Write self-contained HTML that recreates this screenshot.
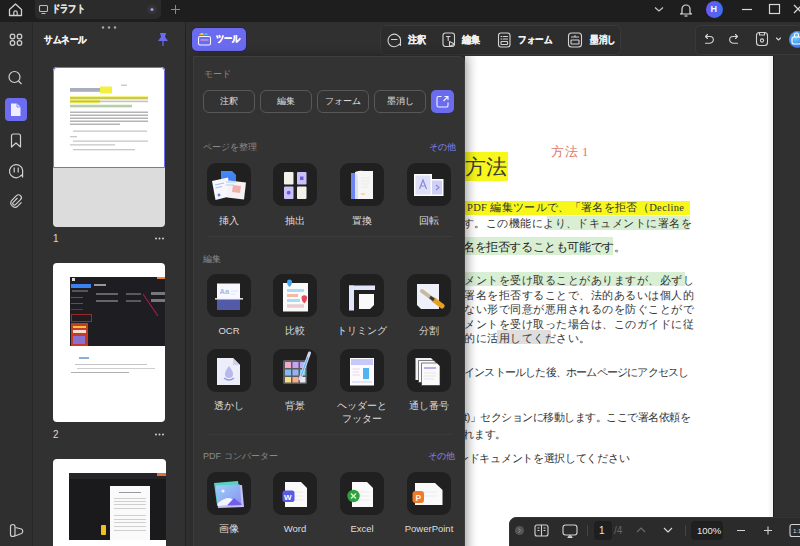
<!DOCTYPE html>
<html><head><meta charset="utf-8">
<style>
*{box-sizing:border-box;margin:0;padding:0}
html,body{width:800px;height:546px;overflow:hidden;background:#303030;font-family:"Liberation Sans",sans-serif;color:#e8e8e8}
.a{position:absolute}
svg.i{position:absolute;overflow:visible}
.txt{position:absolute;white-space:nowrap;line-height:1}
.b{-webkit-text-stroke:0.3px currentColor}
#title{left:0;top:0;width:800px;height:22px;background:#1e1e1e}
#rail{left:0;top:22px;width:33px;height:524px;background:#2f2f2f;border-right:1px solid #272727}
#thumbs{left:33px;top:22px;width:153px;height:524px;background:#313131;border-right:1px solid #222}
#main{left:186px;top:22px;width:614px;height:524px;background:#303030}
</style></head><body>

<!-- ============ Title bar ============ -->
<div id="title" class="a">
  <svg class="i" style="left:0;top:0" width="800" height="22">
    <!-- home -->
    <path d="M9.5 9.5 L15.5 4 L21.5 9.5 V15.5 H9.5 Z" fill="none" stroke="#d0d0d0" stroke-width="1.3" stroke-linejoin="round"/>
    <path d="M13.8 15.5 V12.5 A1.7 1.7 0 0 1 17.2 12.5 V15.5" fill="none" stroke="#d0d0d0" stroke-width="1.2"/>
  </svg>
  <div class="a" style="left:35px;top:0;width:126px;height:19px;background:#2b2b2b;border-radius:0 0 5px 5px"></div>
  <svg class="i" style="left:0;top:0" width="800" height="22">
    <!-- monitor icon in tab -->
    <rect x="39.5" y="5.5" width="8" height="6" rx="1" fill="none" stroke="#bdbdbd" stroke-width="1.1"/>
    <path d="M41.5 13.5 H45.5" stroke="#bdbdbd" stroke-width="1.1"/>
    <!-- close dot -->
    <circle cx="152" cy="9.5" r="5" fill="#343438"/>
    <circle cx="152" cy="9.5" r="1.6" fill="#9a9ad6"/>
    <!-- plus -->
    <path d="M175.5 5 V14 M171 9.5 H180" stroke="#8a8a8a" stroke-width="1"/>
    <!-- chevron -->
    <path d="M655 7.5 L659 11 L663 7.5" fill="none" stroke="#c8c8c8" stroke-width="1.2"/>
    <!-- bell -->
    <path d="M682 13 V9 A4 4 0 0 1 690 9 V13 L691.5 14 H680.5 Z" fill="none" stroke="#d8d8d8" stroke-width="1.2" stroke-linejoin="round"/>
    <path d="M684.5 16 H687.5" stroke="#d8d8d8" stroke-width="1.2"/>
    <!-- minimize -->
    <path d="M742 9.5 H752" stroke="#d8d8d8" stroke-width="1.2"/>
    <!-- maximize -->
    <rect x="769.5" y="4.5" width="10" height="9" fill="none" stroke="#d8d8d8" stroke-width="1.2"/>
    <!-- close -->
    <path d="M794 5 L802 13 M802 5 L794 13" stroke="#d8d8d8" stroke-width="1.2"/>
  </svg>
  <div class="txt b" style="left:52px;top:4px;font-size:10px;font-weight:bold;color:#e0e0e0;transform:scaleX(0.82);transform-origin:left">ドラフト</div>
  <!-- avatar -->
  <div class="a" style="left:705.5px;top:1px;width:17px;height:17px;border-radius:50%;background:linear-gradient(90deg,#7058f0,#3a70f0)"></div>
  <div class="txt" style="left:710.5px;top:5px;font-size:9px;font-weight:bold;color:#f4f4ff">H</div>
</div>

<!-- ============ Left rail ============ -->
<div id="rail" class="a"></div>
<svg class="i" style="left:0;top:0" width="33" height="546">
  <g fill="none" stroke="#d0d0d0" stroke-width="1.2">
    <circle cx="12.5" cy="36.5" r="2.3"/><circle cx="19.5" cy="36.5" r="2.3"/>
    <circle cx="12.5" cy="43" r="2.3"/><circle cx="19.5" cy="43" r="2.3"/>
    <!-- search -->
    <circle cx="14.5" cy="77" r="5.5"/><path d="M18.5 81 L21.5 84"/>
  </g>
  <!-- active page -->
  <rect x="5" y="98" width="22" height="23" rx="4" fill="#6c6cf0"/>
  <path d="M11 103.5 H17 L20.5 107 V116 H11 Z" fill="#f4f4ff" opacity="0.95"/>
  <path d="M17 103.5 V107 H20.5" fill="none" stroke="#6c6cf0" stroke-width="0.8"/>
  <g fill="none" stroke="#d0d0d0" stroke-width="1.2" stroke-linejoin="round">
    <!-- bookmark -->
    <path d="M11.5 147 V136 A2 2 0 0 1 13.5 134 H18.5 A2 2 0 0 1 20.5 136 V147 L16 143 Z"/>
    <!-- comment -->
    <path d="M21.5 175 A6.6 6.6 0 1 1 22.6 170 V177 Z"/>
    <path d="M14.2 167.5 V172.5 M18.2 167.5 V172.5"/>
    <!-- attachment -->
    <path d="M17.5 198 L13.2 202.3 A1.6 1.6 0 0 0 15.5 204.6 L20.5 199.6 A2.8 2.8 0 0 0 16.5 195.6 L11.8 200.3 A4.2 4.2 0 0 0 17.7 206.2 L21.5 202.4"/>
    <!-- bottom logo -->
    <rect x="10.5" y="524.5" width="4.5" height="12" rx="2.25"/><path d="M15 536 L21.5 533.5 A2.6 2.6 0 0 0 21.5 529 L15.5 527.5"/>
  </g>
</svg>

<!-- ============ Thumbnails ============ -->
<div id="thumbs" class="a"></div>
<div class="txt b" style="left:44px;top:35px;font-size:10px;font-weight:bold;color:#f2f2f2;transform:scaleX(0.85);transform-origin:left">サムネール</div>
<svg class="i" style="left:0;top:0" width="185" height="546">
  <!-- drag dots -->
  <circle cx="103" cy="27.5" r="1.2" fill="#aaa"/><circle cx="109" cy="27.5" r="1.2" fill="#aaa"/><circle cx="115" cy="27.5" r="1.2" fill="#aaa"/>
  <!-- pin -->
  <path d="M160 33 H166 L165 37 L168 41 H158 L161 37 Z" fill="#6b6bf0"/>
  <path d="M163 41 V46" stroke="#6b6bf0" stroke-width="1.2"/>
</svg>


<!-- thumbnails -->
<div class="a" style="left:53px;top:67px;width:112px;height:160px;background:#dcdcdc;border-radius:4px;overflow:hidden">
  <div class="a" style="left:0;top:0;width:112px;height:101px;background:#fff;border:1.5px solid #6f6ff0;border-radius:4px 4px 0 0"></div>
</div>
<svg class="i" style="left:0;top:0" width="185" height="546">
  <!-- page1 mini content -->
  <rect x="70" y="88" width="30" height="3.8" fill="#a8aebc"/>
  <rect x="100" y="86.5" width="12" height="7" fill="#f4f040"/>
  <rect x="121" y="84.5" width="6" height="1.5" fill="#ccc"/>
  <rect x="70" y="96.3" width="78" height="3.4" fill="#f0ee50"/>
  <rect x="70" y="99.7" width="30" height="3.4" fill="#f0ee50"/>
  <g fill="#9a9a70" opacity="0.55">
    <rect x="70" y="97.2" width="78" height="1.6"/><rect x="70" y="100.6" width="78" height="1.6"/>
  </g>
  <rect x="70" y="104.5" width="62" height="3.2" fill="#d6eec8"/>
  <rect x="70" y="105.3" width="62" height="1.6" fill="#9aa890" opacity="0.6"/>
  <g fill="#b4b4b4">
    <rect x="70" y="111.5" width="78" height="1.5"/><rect x="70" y="114.5" width="78" height="1.5"/>
    <rect x="70" y="117.5" width="78" height="1.5"/><rect x="70" y="120.5" width="78" height="1.5"/>
    <rect x="70" y="123.5" width="50" height="1.5"/>
  </g>
  <g fill="#c8c8c8">
    <rect x="73" y="130.5" width="74" height="1.3"/><rect x="70" y="136" width="7" height="1.3"/>
    <rect x="73" y="140.5" width="75" height="1.3"/><rect x="70" y="144.2" width="45" height="1.3"/>
    <rect x="73" y="149" width="62" height="1.3"/>
  </g>
  <text x="53" y="242" font-size="10" fill="#d8d8d8" font-family="Liberation Sans">1</text>
  <g fill="#d0d0d0"><circle cx="156" cy="238.5" r="1"/><circle cx="159.5" cy="238.5" r="1"/><circle cx="163" cy="238.5" r="1"/></g>
</svg>

<div class="a" style="left:53px;top:263px;width:112px;height:159px;background:#fff;border-radius:4px;overflow:hidden">
  <div class="a" style="left:17px;top:14px;width:95px;height:69px;background:#1d1d22"></div>
  <div class="a" style="left:19px;top:15px;width:3px;height:3px;background:#ddd"></div>
  <div class="a" style="left:18px;top:21px;width:20px;height:4px;background:#3b82f0"></div>
  <div class="a" style="left:19px;top:27px;width:16px;height:2px;background:#555"></div>
  <div class="a" style="left:18px;top:34px;width:12px;height:1px;background:#555"></div>
  <div class="a" style="left:18px;top:40px;width:12px;height:1px;background:#555"></div>
  <div class="a" style="left:18px;top:46px;width:12px;height:1px;background:#444"></div>
  <div class="a" style="left:18px;top:51px;width:21px;height:8px;border:1px solid #9a2a2a"></div>
  <div class="a" style="left:18px;top:60px;width:17px;height:23px;background:#c63a28"></div>
  <div class="a" style="left:20px;top:63px;width:13px;height:2px;background:#f6c040"></div>
  <div class="a" style="left:20px;top:67px;width:13px;height:3px;background:#f8e0d0"></div>
  <div class="a" style="left:20px;top:73px;width:12px;height:8px;background:#8a70d0"></div>
  <div class="a" style="left:41px;top:21px;width:12px;height:1.5px;background:#999"></div>
  <div class="a" style="left:43px;top:30px;width:22px;height:2px;background:#666"></div>
  <div class="a" style="left:43px;top:37px;width:22px;height:2px;background:#666"></div>
  <div class="a" style="left:73px;top:30px;width:15px;height:2px;background:#5a5a5a"></div>
  <div class="a" style="left:73px;top:37px;width:15px;height:2px;background:#5a5a5a"></div>
  <div class="a" style="left:98px;top:29px;width:14px;height:3px;background:#777"></div>
  <div class="a" style="left:98px;top:36px;width:14px;height:3px;background:#777"></div>
  <div class="a" style="left:104px;top:14px;width:8px;height:2px;background:#f0803a"></div>
  <svg class="i" style="left:0;top:0" width="112" height="159"><path d="M90 31 L105 53" stroke="#a02040" stroke-width="1.2"/></svg>
  <div class="a" style="left:26px;top:94px;width:10px;height:1.5px;background:#8ab0d8"></div>
  <div class="a" style="left:22px;top:101px;width:72px;height:1.2px;background:#c4c4c4"></div>
  <div class="a" style="left:24px;top:105px;width:78px;height:1.2px;background:#cfcfcf"></div>
  <div class="a" style="left:18px;top:109px;width:58px;height:1.2px;background:#b0b0b0"></div>
</div>
<svg class="i" style="left:0;top:0" width="185" height="546">
  <text x="53" y="438" font-size="10" fill="#d8d8d8" font-family="Liberation Sans">2</text>
  <g fill="#d0d0d0"><circle cx="156" cy="434.5" r="1"/><circle cx="159.5" cy="434.5" r="1"/><circle cx="163" cy="434.5" r="1"/></g>
</svg>

<div class="a" style="left:53px;top:459px;width:113px;height:100px;background:#fff;border-radius:4px;overflow:hidden">
  <div class="a" style="left:16px;top:14px;width:97px;height:67px;background:#1a1a1c"></div>
  <div class="a" style="left:16px;top:14px;width:97px;height:6px;background:#262628"></div>
  <div class="a" style="left:104px;top:14px;width:9px;height:3px;background:#e0703a"></div>
  <div class="a" style="left:57px;top:27px;width:40px;height:54px;background:#fafafa"></div>
  <div class="a" style="left:66px;top:33px;width:22px;height:1.2px;background:#999"></div>
  <div class="a" style="left:61px;top:39px;width:32px;height:1px;background:#cfcfcf"></div>
  <div class="a" style="left:61px;top:42px;width:32px;height:1px;background:#cfcfcf"></div>
  <div class="a" style="left:61px;top:45px;width:32px;height:1px;background:#cfcfcf"></div>
  <div class="a" style="left:61px;top:49px;width:32px;height:1px;background:#cfcfcf"></div>
  <div class="a" style="left:61px;top:56px;width:32px;height:1px;background:#cfcfcf"></div>
  <div class="a" style="left:61px;top:60px;width:32px;height:1px;background:#cfcfcf"></div>
  <div class="a" style="left:61px;top:63px;width:32px;height:1px;background:#cfcfcf"></div>
  <div class="a" style="left:61px;top:67px;width:32px;height:1px;background:#cfcfcf"></div>
  <div class="a" style="left:61px;top:71px;width:32px;height:1px;background:#cfcfcf"></div>
  <div class="a" style="left:48px;top:66px;width:5px;height:10px;background:#f0c020;border-radius:1px"></div>
</div>

<div id="main" class="a"></div>

<!-- ============ Main toolbar ============ -->
<div class="a" style="left:192px;top:28px;width:54px;height:23px;border-radius:5px;background:#6b6bef;box-shadow:0 0 0 1px #26264a"></div>
<svg class="i" style="left:0;top:0" width="800" height="60">
  <!-- tools icon -->
  <path d="M199 35 L201 33 H203 L204 35" fill="#f0c040"/>
  <path d="M203.5 35 L205 33 H207 L208 35" fill="#4fb0f0"/>
  <rect x="198.5" y="36.5" width="12" height="8.5" rx="1.5" fill="none" stroke="#f4f4ff" stroke-width="1.1"/>
  <path d="M200.5 40 H208.5" stroke="#c090e0" stroke-width="1.6"/>
  <!-- group boxes -->
  <rect x="380.5" y="25.5" width="240" height="29" rx="5" fill="#2d2d2d" stroke="#393939" stroke-width="1"/>
  <rect x="695.5" y="25.5" width="120" height="29" rx="5" fill="#2d2d2d" stroke="#393939" stroke-width="1"/>
  <g fill="none" stroke="#d4d4d4" stroke-width="1.1" stroke-linejoin="round" stroke-linecap="round">
    <!-- annotate -->
    <path d="M399.5 44 A6.3 6.3 0 1 1 400.5 39.5 V45.5 Z"/>
    <path d="M391.5 39.5 H397"/>
    <!-- edit -->
    <rect x="443" y="33" width="11.5" height="13.5" rx="2.5"/>
    <path d="M446.5 36.5 H450 M448.2 36.5 V40.5"/>
    <path d="M449.5 41.5 L454.5 44 L449.5 46.5 Z" fill="#2d2d2d"/>
    <!-- form -->
    <rect x="498.5" y="33" width="11.5" height="14" rx="2.5"/>
    <path d="M501 36.5 H502 M503.5 36.5 H507.5 M501 39 H502 M503.5 39 H507.5"/>
    <rect x="501" y="41.5" width="6.5" height="3" rx="0.5"/>
    <!-- redact -->
    <rect x="568.5" y="33" width="13" height="14" rx="3"/>
    <path d="M571.5 37 H578.5 M575 35.5 V37"/>
    <rect x="571" y="40" width="8" height="4" rx="0.5"/>
    <!-- undo -->
    <path d="M706 36.5 H710 A3.3 3.3 0 0 1 710 43.2 H705.5"/>
    <path d="M707.5 34.5 L705.5 36.5 L707.5 38.5"/>
    <!-- redo -->
    <path d="M737 36.5 H733 A3.3 3.3 0 0 0 733 43.2 H737.5"/>
    <path d="M735.5 34.5 L737.5 36.5 L735.5 38.5"/>
    <!-- save -->
    <rect x="756.5" y="32.5" width="11" height="13" rx="3"/>
    <path d="M759.5 32.5 V35 H764.5 V32.5"/>
    <circle cx="762" cy="40.5" r="1.6"/>
    <!-- chevron -->
    <path d="M776.5 38 L778.5 40 L780.5 38"/>
  </g>
</svg>
<div class="a" style="left:789px;top:31px;width:17px;height:17px;border-radius:50%;background:radial-gradient(circle at 40% 40%,#6fd0f8,#3b7bf0 60%,#6a4fe0)"></div>
<svg class="i" style="left:0;top:0" width="800" height="60"><g fill="none" stroke="#fff" stroke-width="1.1"><rect x="792" y="37" width="9" height="7" rx="2"/><path d="M794.5 37 V35 A2 2 0 0 1 798.5 35 V37"/></g></svg>
<div class="txt b" style="left:216px;top:34px;font-size:10px;font-weight:bold;color:#fff;transform:scaleX(0.82);transform-origin:left">ツール</div>
<div class="txt b" style="left:408px;top:35px;font-size:9.5px;font-weight:bold;color:#eee;transform:scaleX(0.9);transform-origin:left">注釈</div>
<div class="txt b" style="left:462px;top:35px;font-size:9.5px;font-weight:bold;color:#eee;transform:scaleX(0.9);transform-origin:left">編集</div>
<div class="txt b" style="left:518px;top:35px;font-size:9.5px;font-weight:bold;color:#eee;transform:scaleX(0.85);transform-origin:left">フォーム</div>
<div class="txt b" style="left:590px;top:35px;font-size:9.5px;font-weight:bold;color:#eee;transform:scaleX(0.85);transform-origin:left">墨消し</div>



<!-- ============ Document page ============ -->
<div class="a" style="left:465px;top:56px;width:309px;height:490px;background:#fff;overflow:hidden;border-right:1px solid #1e1e1e">
  <div class="a" style="left:302px;top:0;width:6px;height:490px;background:linear-gradient(90deg,#fff,#f2f2f2)"></div>
  <div class="txt" style="left:86px;top:90px;font-size:12.5px;color:#e07a6a;letter-spacing:0.6px;font-family:'Liberation Serif',serif">方法 1</div>
  <div class="a" style="left:0;top:96px;width:43px;height:29px;background:#f7f71a"></div>
  <div class="txt" style="left:0px;top:101px;font-size:20.5px;color:#3a3a3a">方法</div>
  <div class="a" style="left:0;top:145px;width:225px;height:14px;background:#f7f71a"></div>
  <div class="a" style="left:82px;top:160px;width:143px;height:14px;background:#d9efd3"></div>
  <div class="txt" style="left:2px;top:147px;font-size:10.5px;color:#333;letter-spacing:0.35px;font-family:'Liberation Serif',serif">PDF 編集ツールで、「署名を拒否（Decline</div>
  <div class="txt" style="left:-2px;top:162px;font-size:10.5px;color:#333;letter-spacing:0.45px">す。この機能により、ドキュメントに署名を</div>
  <div class="a" style="left:0;top:181px;width:148px;height:18px;background:#d9efd3"></div>
  <div class="txt" style="left:-2px;top:186px;font-size:11.5px;color:#222;letter-spacing:-0.4px">名を拒否することも可能です。</div>
  <div class="a" style="left:0;top:216px;width:220px;height:14px;background:#d9efd3"></div>
  <div class="a" style="left:32px;top:274px;width:54px;height:14px;background:#dedede"></div>
  <div class="txt" style="left:-1px;top:217px;font-size:10.5px;color:#333;letter-spacing:0.5px;line-height:14.6px">メントを受け取ることがありますが、必ずし<br>署名を拒否することで、法的あるいは個人的<br>ない形で同意が悪用されるのを防ぐことがで<br>メントを受け取った場合は、このガイドに従<br>的に活用してください。</div>
  <div class="txt" style="left:-1px;top:311px;font-size:10.5px;color:#333;letter-spacing:-0.8px">インストールした後、ホームページにアクセスし</div>
  <div class="txt" style="left:-6px;top:356px;font-size:10.5px;color:#333;letter-spacing:-0.5px">nt)」セクションに移動します。ここで署名依頼を</div>
  <div class="txt" style="left:-2px;top:373px;font-size:10.5px;color:#333;letter-spacing:-0.2px">れます。</div>
  <div class="txt" style="left:-7px;top:397px;font-size:10.5px;color:#333;letter-spacing:-0.3px">ンドキュメントを選択してください</div>
  <div class="a" style="left:0;top:0;width:14px;height:490px;background:linear-gradient(90deg,rgba(0,0,0,0.07),rgba(0,0,0,0))"></div>
</div>

<!-- ============ Tools dropdown ============ -->
<style>
.box{position:absolute;width:44px;height:43px;border-radius:9px;background:#202020}
.lab{position:absolute;width:80px;text-align:center;white-space:nowrap;line-height:1;font-size:9.5px;color:#dedede}
.sec{position:absolute;white-space:nowrap;line-height:1;font-size:9px;color:#8c8c8c}
.more{position:absolute;white-space:nowrap;line-height:1;font-size:9px;color:#8585f0}
.mb{position:absolute;top:90px;width:52px;height:23px;border:1px solid #585858;border-radius:6px;text-align:center;font-size:9px;line-height:21px;color:#e0e0e0;white-space:nowrap}
</style>
<div class="a" style="left:193px;top:56px;width:272px;height:500px;background:#333333;border:1px solid #3e3e3e;border-radius:0 6px 0 0;box-shadow:2px 0 10px rgba(0,0,0,0.3)"></div>
<div class="sec" style="left:204px;top:70px">モード</div>
<div class="mb" style="left:203px">注釈</div>
<div class="mb" style="left:260px">編集</div>
<div class="mb" style="left:317px">フォーム</div>
<div class="mb" style="left:374px">墨消し</div>
<div class="a" style="left:431px;top:90px;width:23px;height:23px;border-radius:5px;background:#6b6bef"></div>
<svg class="i" style="left:0;top:0" width="800" height="546">
  <path d="M441.5 96.5 H438.5 A1.5 1.5 0 0 0 437 98 V105.5 A1.5 1.5 0 0 0 438.5 107 H446.5 A1.5 1.5 0 0 0 448 105.5 V102.5" fill="none" stroke="#f4f4ff" stroke-width="1.1"/>
  <path d="M444.5 96.5 H448 V100 M448 96.5 L443.5 101" fill="none" stroke="#f4f4ff" stroke-width="1.1"/>
  <path d="M207 236.5 H452" stroke="#3c3c3c" stroke-width="1"/>
  <path d="M207 434.5 H452" stroke="#3a3a3a" stroke-width="1"/>
</svg>
<div class="sec" style="left:203px;top:143px">ページを整理</div>
<div class="more" style="left:429px;top:143px">その他</div>
<div class="sec" style="left:203px;top:255px">編集</div>
<div class="sec" style="left:203px;top:452px">PDF コンバーター</div>
<div class="more" style="left:428px;top:452px">その他</div>
<div class="box" style="left:207px;top:163px"></div><div class="box" style="left:273px;top:163px"></div><div class="box" style="left:340px;top:163px"></div><div class="box" style="left:407px;top:163px"></div><div class="box" style="left:207px;top:274px"></div><div class="box" style="left:273px;top:274px"></div><div class="box" style="left:340px;top:274px"></div><div class="box" style="left:407px;top:274px"></div><div class="box" style="left:207px;top:349px"></div><div class="box" style="left:273px;top:349px"></div><div class="box" style="left:340px;top:349px"></div><div class="box" style="left:407px;top:349px"></div><div class="box" style="left:207px;top:472px"></div><div class="box" style="left:273px;top:472px"></div><div class="box" style="left:340px;top:472px"></div><div class="box" style="left:407px;top:472px"></div><div class="lab" style="left:189px;top:216px;">挿入</div><div class="lab" style="left:255px;top:216px;">抽出</div><div class="lab" style="left:322px;top:216px;">置換</div><div class="lab" style="left:389px;top:216px;">回転</div><div class="lab" style="left:189px;top:326px;">OCR</div><div class="lab" style="left:255px;top:326px;">比較</div><div class="lab" style="left:322px;top:326px;">トリミング</div><div class="lab" style="left:389px;top:326px;">分割</div><div class="lab" style="left:189px;top:401px;">透かし</div><div class="lab" style="left:255px;top:401px;">背景</div><div class="lab" style="left:322px;top:401px;">ヘッダーと</div><div class="lab" style="left:389px;top:401px;">通し番号</div><div class="lab" style="left:322px;top:414px;">フッター</div><div class="lab" style="left:189px;top:524px;">画像</div><div class="lab" style="left:255px;top:524px;">Word</div><div class="lab" style="left:322px;top:524px;">Excel</div><div class="lab" style="left:389px;top:524px;">PowerPoint</div>
<!-- ICONS -->
<svg class="i" style="left:0;top:0" width="800" height="546">
  <defs>
    <linearGradient id="gb" x1="0" y1="0" x2="0" y2="1"><stop offset="0" stop-color="#3f8cf5"/><stop offset="1" stop-color="#4a6ae8"/></linearGradient>
    <linearGradient id="gimg" x1="0" y1="0" x2="1" y2="1"><stop offset="0" stop-color="#9ad0fa"/><stop offset="1" stop-color="#8a90f0"/></linearGradient>
  </defs>
  <!-- Insert -->
  <path d="M221 171 H232 L236 175 V191 H221 Z" fill="url(#gb)"/>
  <path d="M212 181 L228 177.5 L231.5 196 L215.5 200 Z" fill="#f6f6fb"/>
  <path d="M215 185 L224 183 M215.5 188 L222 186.5" stroke="#a8c0f0" stroke-width="1.2"/>
  <path d="M217.5 194 L220 193.5 L220.5 196 L218 196.5 Z" fill="#6a80e0"/>
  <path d="M229 180.5 L246 182.5 L244 199.5 L227 197.5 Z" fill="#f4f2f4"/>
  <path d="M233 185 L241 186 L240 193 L232 192 Z" fill="#f0b0a8"/>
  <path d="M226 182 H236 M226 185 H234" stroke="#b0d0f8" stroke-width="1"/>
  <!-- Extract -->
  <rect x="284" y="172" width="9.5" height="12.5" rx="1" fill="#f3f2ea"/>
  <rect x="297" y="172" width="9.5" height="12.5" rx="1" fill="#c9c2fa"/>
  <rect x="300" y="176.5" width="3.5" height="3.5" fill="#6a5ae0"/>
  <rect x="284" y="186.5" width="9.5" height="12.5" rx="1" fill="#c9c2fa"/>
  <circle cx="288.7" cy="192.7" r="1.9" fill="#6a5ae0"/>
  <rect x="297" y="186.5" width="9.5" height="12.5" rx="1" fill="#f3f2ea"/>
  <!-- Replace -->
  <path d="M351 173 H357 V199 H351 Z" fill="#6b86f2"/>
  <path d="M355 172 Q360 170 364 171 H373 V199 H355 Z" fill="#f6f6f8"/>
  <path d="M355 172 Q358 175 358 179 V199 H355 Z" fill="#e0e0ea"/>
  <path d="M361 178 H370 M361 181 H370 M361 184 H369 M361 187 H368" stroke="#ececdc" stroke-width="1"/>
  <path d="M361 194 H365" stroke="#f0d060" stroke-width="1.2"/>
  <!-- Rotate -->
  <rect x="414" y="174" width="18" height="22" fill="#fdfdff"/>
  <rect x="415.5" y="175.5" width="15" height="19" fill="#dfe0f8"/>
  <rect x="431" y="179" width="12.5" height="17" fill="#fdfdff"/>
  <rect x="432" y="180.5" width="10" height="14" fill="#cfd0f6"/>
  <path d="M419.5 189 L423 180 L426.5 189 M420.8 186 H425.2" fill="none" stroke="#8a8ad8" stroke-width="1.2"/>
  <path d="M436 185 L439 187.5 L436 190" fill="none" stroke="#8a8ad8" stroke-width="1.1"/>

  <!-- OCR -->
  <rect x="217" y="283.5" width="23" height="15.5" fill="#f8f8ff"/>
  <rect x="217" y="299" width="23" height="11" fill="#535aa8"/>
  <path d="M215 298.8 H243" stroke="#f0f0ff" stroke-width="1.4"/>
  <text x="219.5" y="294" font-size="7.5" font-family="Liberation Sans" font-weight="bold" fill="#a8b4e8">Aa</text>
  <path d="M231 291 H238 M231 294 H236" stroke="#d8e0f4" stroke-width="0.8"/>
  <!-- Compare -->
  <rect x="283" y="283" width="25" height="28.5" fill="#fafafa"/>
  <path d="M287 290.5 H304 M287 295.5 H298 M287 300.5 H300 M287 306 H304" stroke-width="3" stroke="#a8dcf4"/>
  <path d="M287 295.5 H298" stroke-width="3" stroke="#f4b8a8"/>
  <path d="M287 306 H304" stroke-width="3" stroke="#f4c8cc"/>
  <path d="M287 282 A2.5 2.5 0 0 1 292 282 Q292 285 289.5 287 Q287 285 287 282 Z" fill="#40a8f0"/>
  <path d="M301.5 298 A2.8 2.8 0 0 1 307.1 298 Q307.1 301 304.3 303.5 Q301.5 301 301.5 298 Z" fill="#e8485a"/>
  <!-- Trim -->
  <rect x="349" y="285.5" width="26" height="4.5" fill="#e2e6fa"/>
  <rect x="349" y="285.5" width="5" height="25" fill="#e2e6fa"/>
  <path d="M359 294 H374 V305 L370 309 H359 Z" fill="#fafafa"/>
  <!-- Split -->
  <path d="M417 284 H439 V309 H421 L417 305 Z" fill="#eef0fa"/>
  <path d="M422 291 L438 303" stroke="#c8b8a0" stroke-width="4" stroke-linecap="round"/>
  <path d="M434 300 L442 306" stroke="#e8a020" stroke-width="5" stroke-linecap="round"/>
  <path d="M430 297 L434 300" stroke="#3a3a3a" stroke-width="3"/>

  <!-- Watermark -->
  <path d="M217 358 H233 L240 365 V385 H217 Z" fill="#eceefa"/>
  <path d="M233 358 V365 H240" fill="#d0d0e8"/>
  <path d="M229 366 Q233 371 233 374 A4 4 0 0 1 225 374 Q225 371 229 366 Z" fill="#b8b8ec"/>
  <path d="M224 378 Q229 382 234 378" stroke="#9a9ae0" stroke-width="1.5" fill="none"/>
  <!-- Background -->
  <rect x="283" y="360" width="24" height="24" rx="1.5" fill="#5a5a60"/>
  <rect x="285" y="362" width="6" height="6" fill="#f2a8c8"/><rect x="292.5" y="362" width="6" height="6" fill="#c6a4f2"/><rect x="300" y="362" width="5.5" height="6" fill="#b4b2f4"/>
  <rect x="285" y="369.5" width="6" height="6" fill="#80bcf0"/><rect x="292.5" y="369.5" width="6" height="6" fill="#98b0f2"/><rect x="300" y="369.5" width="5.5" height="6" fill="#6ad0e0"/>
  <rect x="285" y="377" width="6" height="5.5" fill="#f6e088"/><rect x="292.5" y="377" width="6" height="5.5" fill="#f6b088"/><rect x="300" y="377" width="5.5" height="5.5" fill="#e8e8f0"/>
  <path d="M309.5 353 L300 379" stroke="#d8d8f0" stroke-width="3" stroke-linecap="round"/>
  <path d="M308 357 L301 376" stroke="#5ab0f0" stroke-width="1.2"/>
  <!-- Header/footer -->
  <rect x="350" y="358" width="24" height="27.5" fill="#fafaff"/>
  <rect x="351" y="359" width="22" height="6" fill="#c8c8f8"/>
  <rect x="363" y="368" width="6" height="11" fill="#50b4f0"/>
  <path d="M352.5 369 H360 M352.5 372 H359 M352.5 375 H360" stroke="#f0d8e0" stroke-width="1.2"/>
  <path d="M352 382 H372" stroke="#dcdcf4" stroke-width="1.5"/>
  <!-- Numbering -->
  <path d="M415.5 358 H431 L434 361 V380 H415.5 Z" fill="#f2f2f6"/>
  <path d="M418.5 360.5 H434 L437 363.5 V382.5 H418.5 Z" fill="#fafafa" stroke="#2a2a2a" stroke-width="0.6"/>
  <path d="M421.5 363 H437 L440 366 V385.5 H421.5 Z" fill="#fafafa" stroke="#2a2a2a" stroke-width="0.6"/>
  <path d="M424 368 H436" stroke="#a8a0e8" stroke-width="1.6"/>
  <path d="M424 373 H436 M424 376 H436 M424 379 H434" stroke="#e6e6ea" stroke-width="1"/>

  <!-- Image -->
  <path d="M214 483 L238 481 L241 503 L217 505 Z" fill="#58d2c0"/>
  <path d="M216 486 L242 485 L244 507 L218 508 Z" fill="#c8c0f4"/>
  <path d="M216 485.5 L240 484.5 L241.5 505 L217.5 506 Z" fill="url(#gimg)"/>
  <circle cx="223" cy="491" r="1.6" fill="#eef6ff"/>
  <path d="M218 503 Q227 496 232 499 L241.5 504.5 L217.5 506 Z" fill="#f4f4ff"/>
  <path d="M227 505.5 L234 498 L241.5 504 L241.5 505 Z" fill="#7060e8"/>
  <!-- Word -->
  <path d="M285 482 H301 L307 488 V507 H285 Z" fill="#fafafa"/>
  <path d="M288 492 H303 M288 496 H303 M288 500 H303" stroke="#ececec" stroke-width="1"/>
  <rect x="282.5" y="490.5" width="12" height="11.5" rx="2.5" fill="#5a5ae6"/>
  <text x="284" y="499.5" font-size="8" font-family="Liberation Sans" font-weight="bold" fill="#fff">W</text>
  <!-- Excel -->
  <path d="M352 482 H367 L373 488 V507 H352 Z" fill="#fafafa"/>
  <path d="M357 492 H370 M357 496 H370 M357 500 H370" stroke="#ececec" stroke-width="1"/>
  <circle cx="353.5" cy="496" r="6.2" fill="#2fa040"/>
  <path d="M351 493.5 L356 498.5 M356 493.5 L351 498.5" stroke="#c8f8c0" stroke-width="1.5"/>
  <!-- PPT -->
  <path d="M415 483 H435 L442.5 490 V505 H415 Z" fill="#fafafa"/>
  <path d="M422 492 H438 M422 496 H438" stroke="#ececf4" stroke-width="1"/>
  <rect x="412.5" y="491" width="11.5" height="12" rx="3" fill="#f07a2a"/>
  <text x="415.5" y="500.5" font-size="8.5" font-family="Liberation Sans" font-weight="bold" fill="#fff2e0">P</text>
</svg>



<!-- ============ Bottom toolbar ============ -->
<div class="a" style="left:509px;top:517px;width:300px;height:36px;background:#2b2b2b;border-radius:7px;border:1px solid #353535"></div>
<svg class="i" style="left:0;top:0" width="800" height="546">
  <circle cx="519.5" cy="530.5" r="4.5" fill="#555"/>
  <path d="M518.5 528.5 L520.5 530.5 L518.5 532.5" fill="none" stroke="#999" stroke-width="0.9"/>
  <g fill="none" stroke="#d4d4d4" stroke-width="1.1" stroke-linejoin="round">
    <rect x="535" y="525" width="13" height="11" rx="2"/>
    <path d="M541.5 525 V536 M537.5 528 H539.5 M537.5 530.5 H539.5 M543.5 528 H545.5 M543.5 530.5 H545.5"/>
    <rect x="563" y="525" width="14" height="10" rx="2.5"/>
    <path d="M568 537.5 L570 535.5 L572 537.5 Z"/>
    <path d="M637 532 L641 528 L645 532" stroke="#6a6a6a"/>
    <path d="M664 528 L668 532 L672 528"/>
    <path d="M737 530.5 H745 M764 530.5 H772 M768 526.5 V534.5"/>
    <rect x="790" y="524.5" width="14" height="12" rx="2"/>
  </g>
  <path d="M587.5 525 V536 M685.5 525 V536" stroke="#444" stroke-width="1"/>
</svg>
<div class="a" style="left:594px;top:521px;width:18px;height:19px;background:#1f1f1f;border-radius:4px"></div>
<div class="txt" style="left:599px;top:526px;font-size:10px;color:#e8e8e8">1</div>
<div class="txt" style="left:614px;top:526px;font-size:10px;color:#666">/4</div>
<div class="a" style="left:691px;top:521px;width:32px;height:19px;background:#1f1f1f;border-radius:4px"></div>
<div class="txt" style="left:697px;top:526px;font-size:9.5px;color:#e8e8e8">100%</div>
<div class="txt" style="left:793px;top:528px;font-size:6px;color:#ddd">1:1</div>

</body></html>
